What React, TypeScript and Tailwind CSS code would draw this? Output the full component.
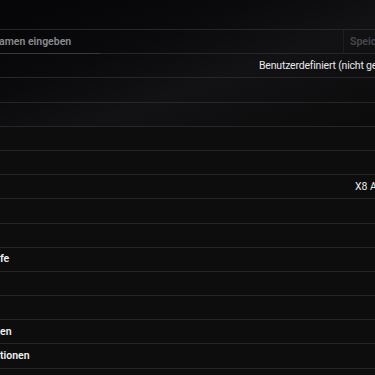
import React from "react";

const Row = ({ children, className = "" }: { children?: React.ReactNode; className?: string }) => (
  <div className={`h-[24.2px] border-t border-[#262626] flex items-center whitespace-nowrap ${className}`}>{children}</div>
);

export default function App() {
  return (
    <div className="w-[375px] h-[375px] overflow-hidden relative bg-[#0d0d0d] font-['Roboto',_'Liberation_Sans',_sans-serif] text-[10px] text-white">
      <div className="bg-[linear-gradient(160deg,#050507_0%,#0a0a0d_35%,#121214_60%,#0b0b0c_100%)]">
        <div className="h-[29px]" />
        <Row className="border-[#222226]">
          <div className="flex-1 h-full flex items-center font-semibold text-[#8a8a8c] -ml-[1px] text-[10.5px]">amen eingeben</div>
          <div className="h-full w-[32px] border-l border-[#1e1e20] pl-[6px] flex items-center font-semibold text-[#48484a] text-[10.5px]">Speichern</div>
        </Row>
        <div className="h-0 relative">
          <div className="absolute left-0 top-0 w-[100px] h-px bg-[#38383a]" />
        </div>
        <Row className="border-[#222226]">
          <div className="pl-[259px] text-[#e8e8e8] text-[10.5px] tracking-[-0.2px]">Benutzerdefiniert (nicht gespeichert)</div>
        </Row>
        <Row className="border-[#222226]" />
        <Row className="border-[#232325]" />
      </div>
      <Row />
      <Row />
      <Row>
        <div className="pl-[355px] text-[#e8e8e8] text-[10.5px]">X8 Air</div>
      </Row>
      <Row />
      <Row />
      <Row>
        <div className="font-semibold text-[#f0f0f0] text-[10.5px]">fe</div>
      </Row>
      <Row />
      <Row />
      <Row>
        <div className="font-semibold text-[#f0f0f0] text-[10.5px]">en</div>
      </Row>
      <Row>
        <div className="font-semibold text-[#f0f0f0] text-[10.5px]">tionen</div>
      </Row>
      <Row />
    </div>
  );
}
